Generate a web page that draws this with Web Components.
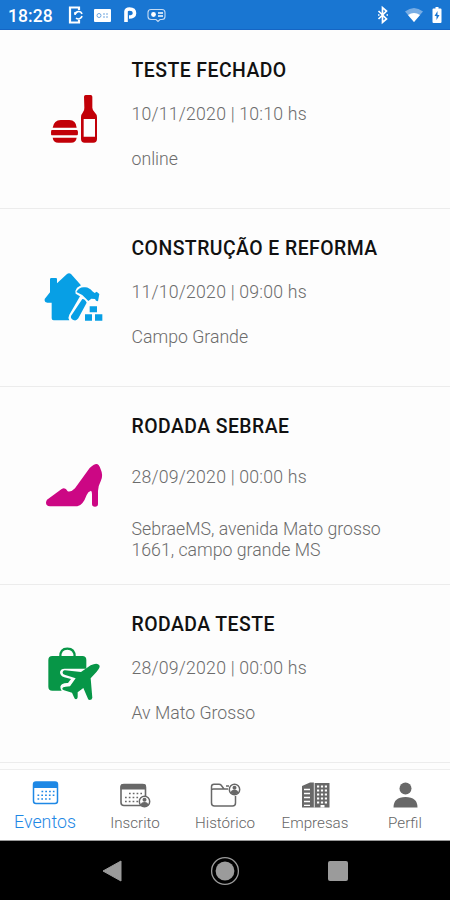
<!DOCTYPE html>
<html lang="pt-BR">
<head>
<meta charset="utf-8">
<title>Eventos</title>
<style>
html,body{margin:0;height:100%;background:#fdfdfd;overflow:hidden}
body{font-family:Roboto,"Liberation Sans",sans-serif}
</style>
</head>
<body>
<events-app></events-app>
<script>
const define = (name, html) => customElements.define(name, class extends HTMLElement {
  constructor() {
    super();
    this.attachShadow({ mode: 'open' }).innerHTML = html;
  }
});

define('status-bar', `
<style>
:host{display:flex;align-items:center;height:30px;padding:0 7px 0 8px;box-sizing:border-box;background:#1976d2;color:#fff;border-bottom:1px solid #1565c4}
.time{font-size:17.5px;font-weight:500;line-height:30px;width:58px;padding-top:3px;letter-spacing:.1px}
svg{display:block;margin-top:1px}
.gap{flex:1}
</style>
<span class="time">18:28</span>
<svg width="104" height="20" viewBox="0 0 104 20" fill="none" stroke="#fff">
  <path d="M13 5V2.500H4v15h9V15" stroke-width="2.200"/><path d="M8 8h3M9 10a3.600 3.600 0 0 1 7-1M16 11a3.600 3.600 0 0 1-6 2" stroke-width="1.600"/>
  <rect x="28" y="4" width="17" height="13" rx="1" fill="#fff" stroke="none"/>
  <circle cx="33" cy="10.500" r="2" stroke="#6fa6e0"/><path d="M37 9h2M40 9h2M37 12h2M40 12h2" stroke="#6fa6e0"/>
  <path d="M60 17V6.500Q60 4 63.500 4Q68.500 4 68.500 8.200Q68.500 12 63 12" stroke-width="3.600"/>
  <path d="M85 4.500h11q3 0 3 3v4q0 3-3 3h-2l-2 2-2-2h-5q-3 0-3-3v-4q0-3 3-3z" stroke-width="1.100" stroke="#c5dbf3"/>
  <circle cx="87.500" cy="9.500" r="2.400" fill="#fff" stroke="none"/><path d="M92 8h5M92 11h5" stroke-width="1.600"/>
</svg>
<span class="gap"></span>
<svg width="68" height="20" viewBox="0 0 68 20">
  <path d="M3.500 6l8 8-4 3.500v-15l4 3.500-8 8" fill="none" stroke="#fff" stroke-width="1.700"/><path d="M3 10h1.500M11.500 10H13" stroke="#fff" stroke-width="1.500"/>
  <path d="M30 6.500q9-7 18 0L39 17z" fill="#78ade4"/><path d="M33 10q6-4 12 0l-6 7z" fill="#fff"/>
  <path d="M58.500 3.500h2V2h3v1.500h2q1 0 1 1V17q0 1-1 1h-7q-1 0-1-1V4.500q0-1 1-1z" fill="#fff"/><path d="M62.500 6l-3 5h2v4l3-5h-2z" fill="#1976d2"/>
</svg>`);

define('event-row', `
<style>
:host{display:flex;align-items:center;height:var(--row,178px);box-sizing:border-box;border-bottom:1px solid #ececec;color:#6c6c6c}
.icon{width:90px;height:80px;margin-left:30px;flex:none}
.text{align-self:flex-start;padding:29px 0 0 11.500px;display:flex;flex-direction:column;gap:var(--gap,22px);font-size:17.700px;font-weight:300;line-height:21px;width:270px}
.title{font-size:19.400px;font-weight:500;line-height:22px;color:#111;letter-spacing:.46px}
.date{letter-spacing:.21px}
.place{margin-top:2px}
</style>
<div class="icon"><slot name="icon"></slot></div>
<div class="text"><div class="title"><slot name="title"></slot></div><div class="date"><slot name="date"></slot></div><div class="place"><slot></slot></div></div>`);

define('tab-item', `
<style>
:host{display:flex;flex-direction:column;align-items:center;width:90px;color:#666;font-size:15.200px;font-weight:300;line-height:20px;padding-top:8px;box-sizing:border-box}
.icon{width:60px;height:35px}
:host([active]){color:#1e88e5;font-size:17.800px}
:host([active]) .label{margin-top:-1px}
</style>
<div class="icon"><slot name="icon"></slot></div><div class="label"><slot></slot></div>`);

define('system-nav', `
<style>:host{display:flex;align-items:center;justify-content:space-between;height:60px;padding:0 102px;box-sizing:border-box;background:#000;border-top:1px solid #999}svg{display:block}</style>
<svg width="20" height="22"><path d="M19 1v20L1 11z" fill="#9b9b9b" stroke="#9b9b9b" stroke-linejoin="round"/></svg>
<svg width="30" height="30"><circle cx="15" cy="15" r="13.400" fill="none" stroke="#9b9b9b" stroke-width="1.300"/><circle cx="15" cy="15" r="9.400" fill="#9b9b9b"/></svg>
<svg width="20" height="20"><rect width="20" height="20" rx="2" fill="#9b9b9b"/></svg>`);

define('events-app', `
<style>
:host{display:flex;flex-direction:column;width:450px;height:900px;background:#fdfdfd}
main{flex:1;padding-top:1px;overflow:hidden}
nav{display:flex;height:71px;box-sizing:border-box;border-top:1px solid #eee;background:#fff}
svg{display:block}
.tall{--row:198px;--gap:29px}
</style>
<status-bar></status-bar>
<main>
<event-row>
  <svg slot="icon" width="90" height="80" viewBox="0 0 270 240" fill="#c20008"><path d="M68 143q4-23 24-23h26q20 0 22 23zM65 150h76q3 0 3 8t-3 8H65q-2 0-2-8t2-8zM68 173h72q-2 15-17 15H85q-15 0-17-15z"/><path fill-rule="evenodd" d="M162 50q0-5 5-5h15q5 0 5 5v33q0 8 8 15q6 5 6 14v65q0 11-11 11h-26q-11 0-11-11v-65q0-9 5-14q6-7 5-15zM161 117v53h34v-53z"/></svg>
  <span slot="title">TESTE FECHADO</span><span slot="date">10/11/2020 | 10:10 hs</span>online
</event-row>
<event-row>
  <svg slot="icon" width="90" height="80" viewBox="0 -6 270 240" fill="#079fe5"><path d="M44 117l16-20V58q0-4 4-4h14q3 0 3 4v12l30-28q6-5 12 0l30 34-12 7q-7 9-4 18l13 8-32 55q-5 9 0 17H71q-6 0-6-6v-47H52q-8-1-8-6z"/><path d="M139 96q9-17 27-14q12 1 21 12l7 5 6-4 8 7-4 22-6-2-3-5-11-1-9 7-9-9q-9-11-27-18z"/><path d="M157 117q9 1 13 11l-25 47q-6 9-15 5t-7-12z"/><path d="M179 139h22v18h-22zM165 163h21v19h-21zM195 163h22v19h-22z"/></svg>
  <span slot="title">CONSTRUÇÃO E REFORMA</span><span slot="date">11/10/2020 | 09:00 hs</span>Campo Grande
</event-row>
<event-row class="tall">
  <svg slot="icon" width="90" height="80" viewBox="0 -12 270 240" fill="#cc0784"><path d="M51 149l44-32q11-6 18 7 11 3 22-9l38-53q12-17 25-20 9-1 14 16 9 19 0 36-7 13-8 29v39q0 8-9 8t-9-8v-29q0-9-3-11-9 3-13 13-11 31-28 34H60q-12-1-12-11 0-5 3-9z"/></svg>
  <span slot="title">RODADA SEBRAE</span><span slot="date">28/09/2020 | 00:00 hs</span>SebraeMS, avenida Mato grosso 1661, campo grande MS
</event-row>
<event-row>
  <svg slot="icon" width="90" height="80" viewBox="0 -3 270 240" fill="#079647"><path d="M91 65q-1-24 21-24t22 24" fill="none" stroke="#079647" stroke-width="7"/><path d="M67 63h90q12 0 12 12v26H104q-12 0-14 10 0 12 13 16l20 5-9 12q-20-1-23 11 0 6 4 12H67q-12 0-12-12V75q0-12 12-12z"/><path d="M98 111q2-6 7-5l48 5 29-20q20-10 26 0 4 6-8 19l-18 20 5 58q-1 7-8 7-5 0-6-6l-13-30-17 13v15q-1 6-5 6t-6-6l-6-14-24-7q-6-2-5-6t10-5l13-1 17-24-31-10q-9-2-8-9z"/></svg>
  <span slot="title">RODADA TESTE</span><span slot="date">28/09/2020 | 00:00 hs</span>Av Mato Grosso
</event-row>
</main>
<nav>
<tab-item active>
  <svg slot="icon" width="60" height="35" viewBox="0 0 60 35" fill="none" stroke="#1e88e5"><rect x="18.500" y="4" width="24" height="21.500" rx="2.500" stroke-width="1.500"/><path d="M18.500 10V6q0-2 2-2h20q2 0 2 2v4z" fill="#1e88e5" stroke="none"/><path d="M26.500 13.500h13M22.500 17.200h17M22.500 21h13" stroke-width="1.600" stroke-dasharray="1.700 2.100"/></svg>Eventos</tab-item>
<tab-item>
  <svg slot="icon" width="60" height="35" viewBox="0 0 60 35" fill="none" stroke="#686868"><path d="M38 27.500H19q-3 0-3-3V9.500q0-3 3-3h18.500q3 0 3 3V18" stroke-width="1.600"/><path d="M15.500 11.500V8q0-2 2-2h21.500q2 0 2 2v3.500z" fill="#686868" stroke="none"/><path d="M24 15.500h13M20 19.500h15M20 23.500h13" stroke-width="1.500" stroke-dasharray="1.700 2.100"/><circle cx="39.500" cy="23.500" r="5.200" fill="#fff" stroke-width="1.500"/><circle cx="39.500" cy="21.700" r="2" fill="#686868" stroke="none"/><path d="M35.800 27q0-3 3.700-3t3.700 3q-3.700 3-7.400 0z" fill="#686868" stroke="none"/></svg>Inscrito</tab-item>
<tab-item>
  <svg slot="icon" width="60" height="35" viewBox="0 0 60 35" fill="none" stroke="#686868"><path d="M33 11H29l-3-4q-.6-.8-2-.8h-5q-2.500 0-2.500 2.500V25q0 3 3 3h18q3 0 3-3v-7M16.500 12q0-1 2-1H33M31 8h3" stroke-width="1.500"/><circle cx="39.500" cy="11.500" r="5.200" fill="#fff" stroke-width="1.500"/><circle cx="39.500" cy="9.800" r="2" fill="#686868" stroke="none"/><path d="M35.800 14.800q0-3 3.700-3t3.700 3q-3.700 3-7.400 0z" fill="#686868" stroke="none"/></svg>Histórico</tab-item>
<tab-item>
  <svg slot="icon" width="60" height="35" viewBox="0 0 60 35"><path d="M17 8l8-3.500h4V5h15.500v24.500H17z" fill="#686868"/><path d="M19 11.500h6M19 15.500h6M19 19.500h6M19 23.500h6M19 27.300h6" stroke="#fff" stroke-width="1.300"/><path d="M29.300 4v25.500" stroke="#fff" stroke-width=".8"/><path d="M32 8.500h11M32 12.500h11M32 16.500h11M32 20.500h11M32 24.500h11" stroke="#fff" stroke-width="1.800" stroke-dasharray="2.200 1.700"/><path d="M35.500 29.500V27h4v2.500z" fill="#fff"/></svg>Empresas</tab-item>
<tab-item>
  <svg slot="icon" width="60" height="35" viewBox="0 0 60 35" fill="#686868"><circle cx="30.500" cy="10.500" r="6"/><path d="M18.500 29.500q0-10.500 12-10.500t12 10.500z"/></svg>Perfil</tab-item>
</nav>
<system-nav></system-nav>`);
</script>
</body>
</html>
